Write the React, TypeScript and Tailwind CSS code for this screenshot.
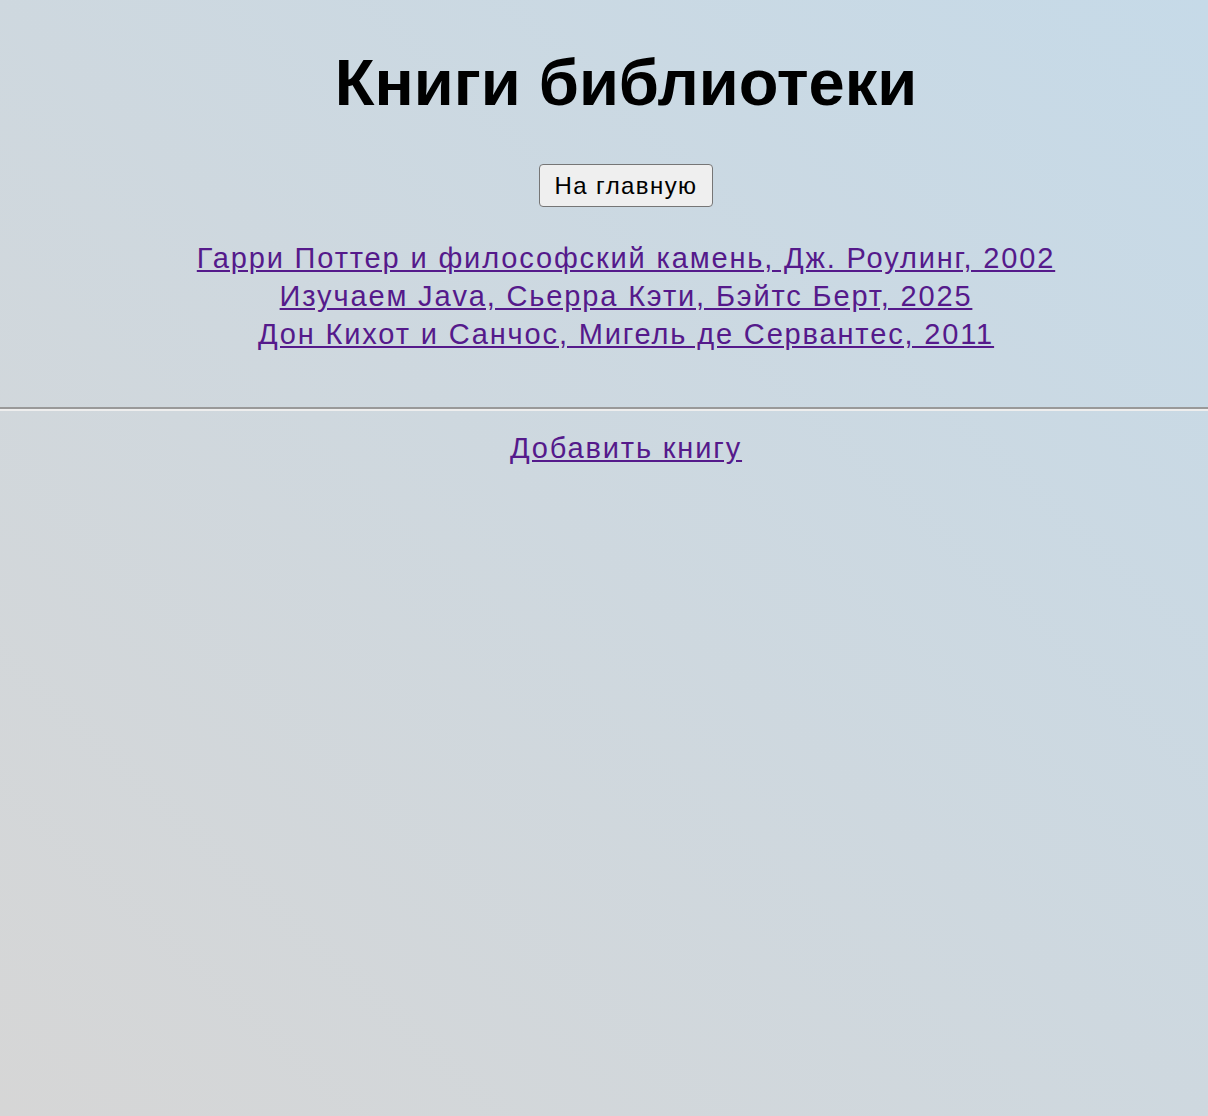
const books = [
  'Гарри Поттер и философский камень, Дж. Роулинг, 2002',
  'Изучаем Java, Сьерра Кэти, Бэйтс Берт, 2025',
  'Дон Кихот и Санчос, Мигель де Сервантес, 2011',
]

export default function App() {
  return (
    <div
      className="min-h-screen bg-linear-to-tr from-[#d6d6d6] to-[#c6dae8] text-black"
      style={{ fontFamily: '"Liberation Sans", Arial, sans-serif' }}
    >
      <div className="flex flex-col items-center pt-[44px] pl-[44px]">
        <h1 className="text-[65px] font-bold leading-[78px]">Книги библиотеки</h1>
        <button
          type="button"
          className="mt-[42px] h-[43px] rounded-[4px] border-[1.5px] border-[#767676] bg-[#efefef] px-[15px] text-[24px] leading-none tracking-[1.4px]"
        >
          На главную
        </button>
        <div className="mt-[32px] flex flex-col items-center text-[29px] leading-[38px] tracking-[1.85px]">
          {books.map((book) => (
            <a key={book} href="#" className="text-[#551a8b] underline">
              {book}
            </a>
          ))}
        </div>
      </div>
      <hr className="mt-[54px] border-t-2 border-b-2 border-t-[#999999] border-b-[#eeeeee]" />
      <div className="mt-[18px] flex justify-center pl-[44px] text-[29px] leading-[38px] tracking-[1.85px]">
        <a href="#" className="text-[#551a8b] underline">
          Добавить книгу
        </a>
      </div>
    </div>
  )
}
